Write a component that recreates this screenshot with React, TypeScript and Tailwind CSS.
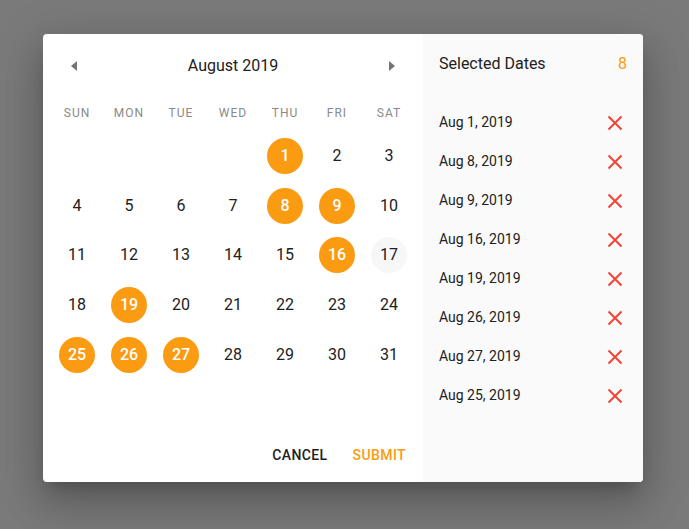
import React from "react";

const selected = new Set([1, 8, 9, 16, 19, 25, 26, 27]);
const list = ["Aug 1, 2019", "Aug 8, 2019", "Aug 9, 2019", "Aug 16, 2019", "Aug 19, 2019", "Aug 26, 2019", "Aug 27, 2019", "Aug 25, 2019"];
const weekdays = ["SUN", "MON", "TUE", "WED", "THU", "FRI", "SAT"];

export default function App() {
  const cells: (number | null)[] = [null, null, null, null];
  for (let d = 1; d <= 31; d++) cells.push(d);
  return (
    <div className="w-[689px] h-[529px] bg-[#7a7a7a] flex items-start pl-[43px] pt-[34px]" style={{ fontFamily: "Roboto, 'Liberation Sans', sans-serif" }}>
      <div className="w-[600px] h-[448px] bg-white rounded-[4px] flex overflow-hidden shadow-[0_11px_15px_-7px_rgba(0,0,0,0.2),0_24px_38px_3px_rgba(0,0,0,0.14),0_9px_46px_8px_rgba(0,0,0,0.12)]">
        <div className="w-[380px] flex flex-col pt-[15px] px-[8px]">
          <div className="h-[34px] flex items-center justify-between px-[19px]">
            <svg width="8" height="10" viewBox="0 0 8 10"><path d="M7 0 L1 5 L7 10 Z" fill="#757575" /></svg>
            <span className="text-[16px] text-[#212121]">August 2019</span>
            <svg width="8" height="10" viewBox="0 0 8 10"><path d="M1 0 L7 5 L1 10 Z" fill="#757575" /></svg>
          </div>
          <div className="mt-[18px] h-[24px] grid grid-cols-7">
            {weekdays.map((w) => (
              <div key={w} className="flex items-center justify-center text-[12px] tracking-[1px] text-[#8a8a8a]">{w}</div>
            ))}
          </div>
          <div className="mt-[6px] grid grid-cols-7 auto-rows-[49.75px]">
            {cells.map((d, i) => (
              <div key={i} className="flex items-center justify-center">
                {d !== null && (
                  <div
                    className={
                      "w-[36px] h-[36px] rounded-full flex items-center justify-center text-[16px] " +
                      (selected.has(d) ? "bg-[#fb9b12] text-white font-medium" : d === 17 ? "bg-[#f7f7f7] text-[#212121]" : "text-[#212121]")
                    }
                  >
                    {d}
                  </div>
                )}
              </div>
            ))}
          </div>
          <div className="mt-auto flex justify-end gap-[9px] pb-[9px] pr-[1px]">
            <button className="h-[36px] px-[8px] text-[14px] font-medium tracking-[0.4px] text-[#212121]">CANCEL</button>
            <button className="h-[36px] px-[8px] text-[14px] font-medium tracking-[0.4px] text-[#fb9b12]">SUBMIT</button>
          </div>
        </div>
        <div className="flex-1 bg-[#fafafa] flex flex-col pt-[18px]">
          <div className="h-[24px] flex items-center justify-between pl-[16px] pr-[16px]">
            <span className="text-[16px] text-[#212121]">Selected Dates</span>
            <span className="text-[16px] text-[#fb9b12]">8</span>
          </div>
          <div className="mt-[27px] flex flex-col">
            {list.map((t) => (
              <div key={t} className="h-[39px] flex items-center justify-between pl-[16px] pr-[20px]">
                <span className="text-[14px] text-[#212121]">{t}</span>
                <svg width="16" height="16" viewBox="0 0 16 16">
                  <path d="M1.5 1.5 L14.5 14.5 M14.5 1.5 L1.5 14.5" stroke="#f44336" strokeWidth="2" />
                </svg>
              </div>
            ))}
          </div>
        </div>
      </div>
    </div>
  );
}
